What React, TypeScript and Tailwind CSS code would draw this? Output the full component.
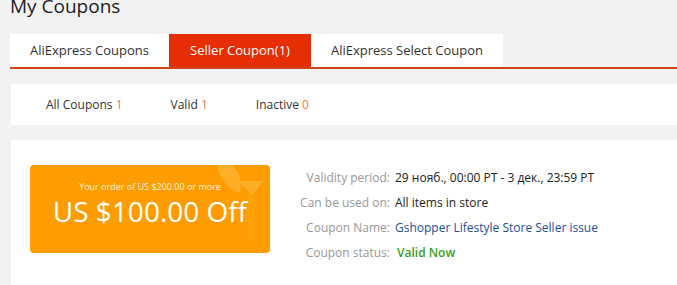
import React from "react";

const tabs = [
  { label: "AliExpress Coupons", w: "w-[159px]", active: false },
  { label: "Seller Coupon(1)", w: "w-[142px]", active: true },
  { label: "AliExpress Select Coupon", w: "w-[192px]", active: false },
];

const filters = [
  { label: "All Coupons", count: 1 },
  { label: "Valid", count: 1 },
  { label: "Inactive", count: 0 },
];

const CouponDecor = () => (
  <svg
    className="absolute right-0 top-0"
    width="52"
    height="80"
    viewBox="0 0 52 80"
    fill="none"
  >
    <path d="M0 0 H14 C22 6 24 18 22 28 C12 26 4 16 0 6 Z" fill="#ffc04a" opacity="0.5" />
    <path d="M20 16 H46 L34 30 Z" fill="#ffc04a" opacity="0.5" />
    <path d="M30 28 H36 V76 H30 Z" fill="#ffb020" opacity="0.25" />
  </svg>
);

const Row = ({ label, children }: { label: string; children: React.ReactNode }) => (
  <div className="flex h-[25px] items-center">
    <div className="w-[100px] shrink-0 text-right text-[#999]">{label}</div>
    <div className="pl-[5px]">{children}</div>
  </div>
);

export default function App() {
  return (
    <div
      className="h-[285px] w-[677px] overflow-hidden bg-[#f2f2f2] pl-[10px] text-[#333]"
      style={{ fontFamily: '"Open Sans", "Noto Sans", sans-serif' }}
    >
      <div className="-mt-[7px] h-[41px] text-[19px] leading-[26px] text-[#222]">My Coupons</div>

      <div className="flex border-b-2 border-[#d0421b]">
        {tabs.map((t) => (
          <div
            key={t.label}
            className={
              t.active
                ? `${t.w} flex h-[33px] items-center justify-center bg-[#e62e04] text-[13px] text-white`
                : `${t.w} flex h-[33px] items-center justify-center bg-white text-[13px] text-[#333]`
            }
          >
            {t.label}
          </div>
        ))}
      </div>

      <div className="mt-[15px] ml-[1px] flex h-[41px] items-center bg-white pl-[35px] text-[12px] text-[#333]">
        {filters.map((f) => (
          <div key={f.label} className="mr-[48px]">
            {f.label} <span className="text-[#f5784e]">{f.count}</span>
          </div>
        ))}
      </div>

      <div className="mt-[15px] ml-[1px] flex h-[160px] bg-white pl-[19px] pt-[25px]">
        <div className="relative flex h-[88px] w-[240px] shrink-0 flex-col items-center overflow-hidden rounded-[4px] bg-[#ff9c00] text-white">
          <CouponDecor />
          <div className="relative mt-[16px] text-[9px] leading-[11px] text-[#fff3d6]">
            Your order of US $200.00 or more
          </div>
          <div className="relative mt-[2px] text-[28px] leading-[34px]">US $100.00 Off</div>
        </div>
        <div className="ml-[20px] text-[12px]">
          <Row label="Validity period:">
            <span className="text-[#222]">29 нояб., 00:00 PT - 3 дек., 23:59 PT</span>
          </Row>
          <Row label="Can be used on:">
            <span className="text-[#222]">All items in store</span>
          </Row>
          <Row label="Coupon Name:">
            <span className="text-[#1d4f9a]">Gshopper Lifestyle Store Seller issue</span>
          </Row>
          <Row label="Coupon status:">
            <span className="ml-[2px] font-semibold text-[#3a9f1c]">Valid Now</span>
          </Row>
        </div>
      </div>
    </div>
  );
}
